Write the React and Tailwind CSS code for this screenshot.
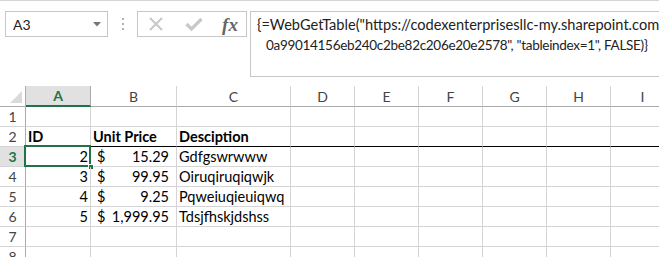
import React from "react";

const cols = [
  { w: "w-[65px]", l: "A" },
  { w: "w-[86px]", l: "B" },
  { w: "w-[114px]", l: "C" },
  { w: "w-[64px]", l: "D" },
  { w: "w-[64px]", l: "E" },
  { w: "w-[64px]", l: "F" },
  { w: "w-[64px]", l: "G" },
  { w: "w-[64px]", l: "H" },
  { w: "w-[64px]", l: "I" },
];

const rows = [
  { n: 1 },
  { n: 2, header: true },
  { n: 3, id: "2", price: "15.29", desc: "Gdfgswrwww", sel: true },
  { n: 4, id: "3", price: "99.95", desc: "Oiruqiruqiqwjk" },
  { n: 5, id: "4", price: "9.25", desc: "Pqweiuqieuiqwq" },
  { n: 6, id: "5", price: "1,999.95", desc: "Tdsjfhskjdshss" },
  { n: 7 },
  { n: 8 },
];

function Row({ r }) {
  const bottom = r.header ? "border-b-[#000]" : "border-b-[#d4d4d4]";
  return (
    <div className="flex h-[20px] shrink-0">
      <div
        className={`w-[26px] shrink-0 border-r border-r-[#ababab] border-b border-b-[#d4d4d4] flex items-center justify-center text-[14px] leading-none ${
          r.sel ? "bg-[#e1e1e1] text-[#217346] font-bold" : "text-[#444]"
        }`}
      >
        {r.n}
      </div>
      {/* A */}
      <div className={`relative w-[65px] shrink-0 border-r border-r-[#d4d4d4] border-b ${bottom} flex items-center px-[2px] text-[14.5px] ${r.header ? "font-bold" : "justify-end"}`}>
        {r.header ? "ID" : r.id}
        {r.sel && (
          <div className="absolute left-[-2px] top-[-2px] w-[67px] h-[22px] border-2 border-[#217346]">
            <div className="absolute right-[-5px] bottom-[-5px] w-[6px] h-[6px] bg-[#217346] border border-white" />
          </div>
        )}
      </div>
      {/* B */}
      <div className={`w-[86px] shrink-0 border-r border-r-[#d4d4d4] border-b ${bottom} flex items-center px-[2px] text-[14.5px]`}>
        {r.header ? (
          <span className="font-bold">Unit Price</span>
        ) : r.price ? (
          <div className="flex w-full justify-between pl-[4px] pr-[5px]">
            <span>$</span>
            <span>{r.price}</span>
          </div>
        ) : null}
      </div>
      {/* C */}
      <div className={`w-[114px] shrink-0 border-r border-r-[#d4d4d4] border-b ${bottom} flex items-center px-[2px] text-[14.5px] ${r.header ? "font-bold" : ""}`}>
        {r.header ? "Desciption" : r.desc}
      </div>
      {cols.slice(3).map((c) => (
        <div key={c.l} className={`${c.w} shrink-0 border-r border-r-[#d4d4d4] border-b ${bottom}`} />
      ))}
    </div>
  );
}

export default function App() {
  return (
    <div
      className="w-[659px] h-[257px] overflow-hidden bg-white text-black"
      style={{ fontFamily: "Lato, 'Liberation Sans', sans-serif" }}
    >
      <div className="h-[86px] border-t border-t-[#d4d4d4]">
        <div className="flex items-start pt-[10px]">
          {/* name box */}
          <div className="ml-[5px] w-[103px] h-[26px] shrink-0 border border-[#c6c6c6] flex items-center justify-between pl-[7px] pr-[6px] text-[14px] text-[#222]">
            <span>A3</span>
            <svg width="8" height="5" viewBox="0 0 8 5"><path d="M0 0 L8 0 L4 4.5 Z" fill="#777" /></svg>
          </div>
          {/* dots */}
          <div className="w-[29px] h-[26px] shrink-0 flex flex-col items-center justify-center gap-[3px]">
            <div className="w-[2px] h-[2px] bg-[#b0b0b0]" />
            <div className="w-[2px] h-[2px] bg-[#b0b0b0]" />
            <div className="w-[2px] h-[2px] bg-[#b0b0b0]" />
          </div>
          {/* buttons */}
          <div className="w-[110px] h-[26px] shrink-0 border border-[#c6c6c6] flex items-center">
            <div className="w-[36px] shrink-0 flex justify-center">
              <svg width="16" height="16" viewBox="0 0 16 16">
                <path d="M2 2 L14 14 M14 2 L2 14" stroke="#c8c8c8" strokeWidth="2" />
              </svg>
            </div>
            <div className="w-[40px] shrink-0 flex justify-center">
              <svg width="18" height="16" viewBox="0 0 18 16">
                <path d="M1.5 8 L6.5 13 L16.5 3" stroke="#c8c8c8" strokeWidth="3.2" fill="none" />
              </svg>
            </div>
            <div className="w-[32px] shrink-0 flex justify-center">
              <span
                className="italic text-[19px] leading-none text-[#666] font-bold"
                style={{ fontFamily: "'Liberation Serif', serif" }}
              >
                fx
              </span>
            </div>
          </div>
          {/* formula bar */}
          <div className="ml-[3px] h-[66px] w-[420px] shrink-0 border border-[#c6c6c6] border-r-0 pl-[6px] pt-[2px] text-[#222] whitespace-nowrap overflow-hidden">
            <div className="text-[14.6px] leading-[21px]">{'{=WebGetTable("https://codexenterprisesllc-my.sharepoint.com'}</div>
            <div className="pl-[9px] text-[13.5px] leading-[21px] tracking-[-0.3px]">{'0a99014156eb240c2be82c206e20e2578", "tableindex=1", FALSE)}'}</div>
          </div>
        </div>
      </div>
      {/* grid */}
      <div className="flex flex-col">
        <div className="flex h-[21px] shrink-0">
          <div className="w-[26px] shrink-0 border-r border-r-[#ababab] border-b border-b-[#ababab] relative">
            <svg className="absolute right-[3px] bottom-[3px]" width="12" height="12" viewBox="0 0 12 12">
              <path d="M12 0 L12 12 L0 12 Z" fill="#dadada" />
            </svg>
          </div>
          {cols.map((c, i) => (
            <div
              key={c.l}
              className={`${c.w} shrink-0 border-r border-b flex items-center justify-center text-[14px] ${
                i === 0
                  ? "bg-[#e1e1e1] border-r-[#ababab] border-b-2 border-b-[#217346] text-[#217346] font-bold"
                  : "border-r-[#d4d4d4] border-b-[#ababab] text-[#444]"
              }`}
            >
              {c.l}
            </div>
          ))}
        </div>
        {rows.map((r) => (
          <Row key={r.n} r={r} />
        ))}
      </div>
    </div>
  );
}
